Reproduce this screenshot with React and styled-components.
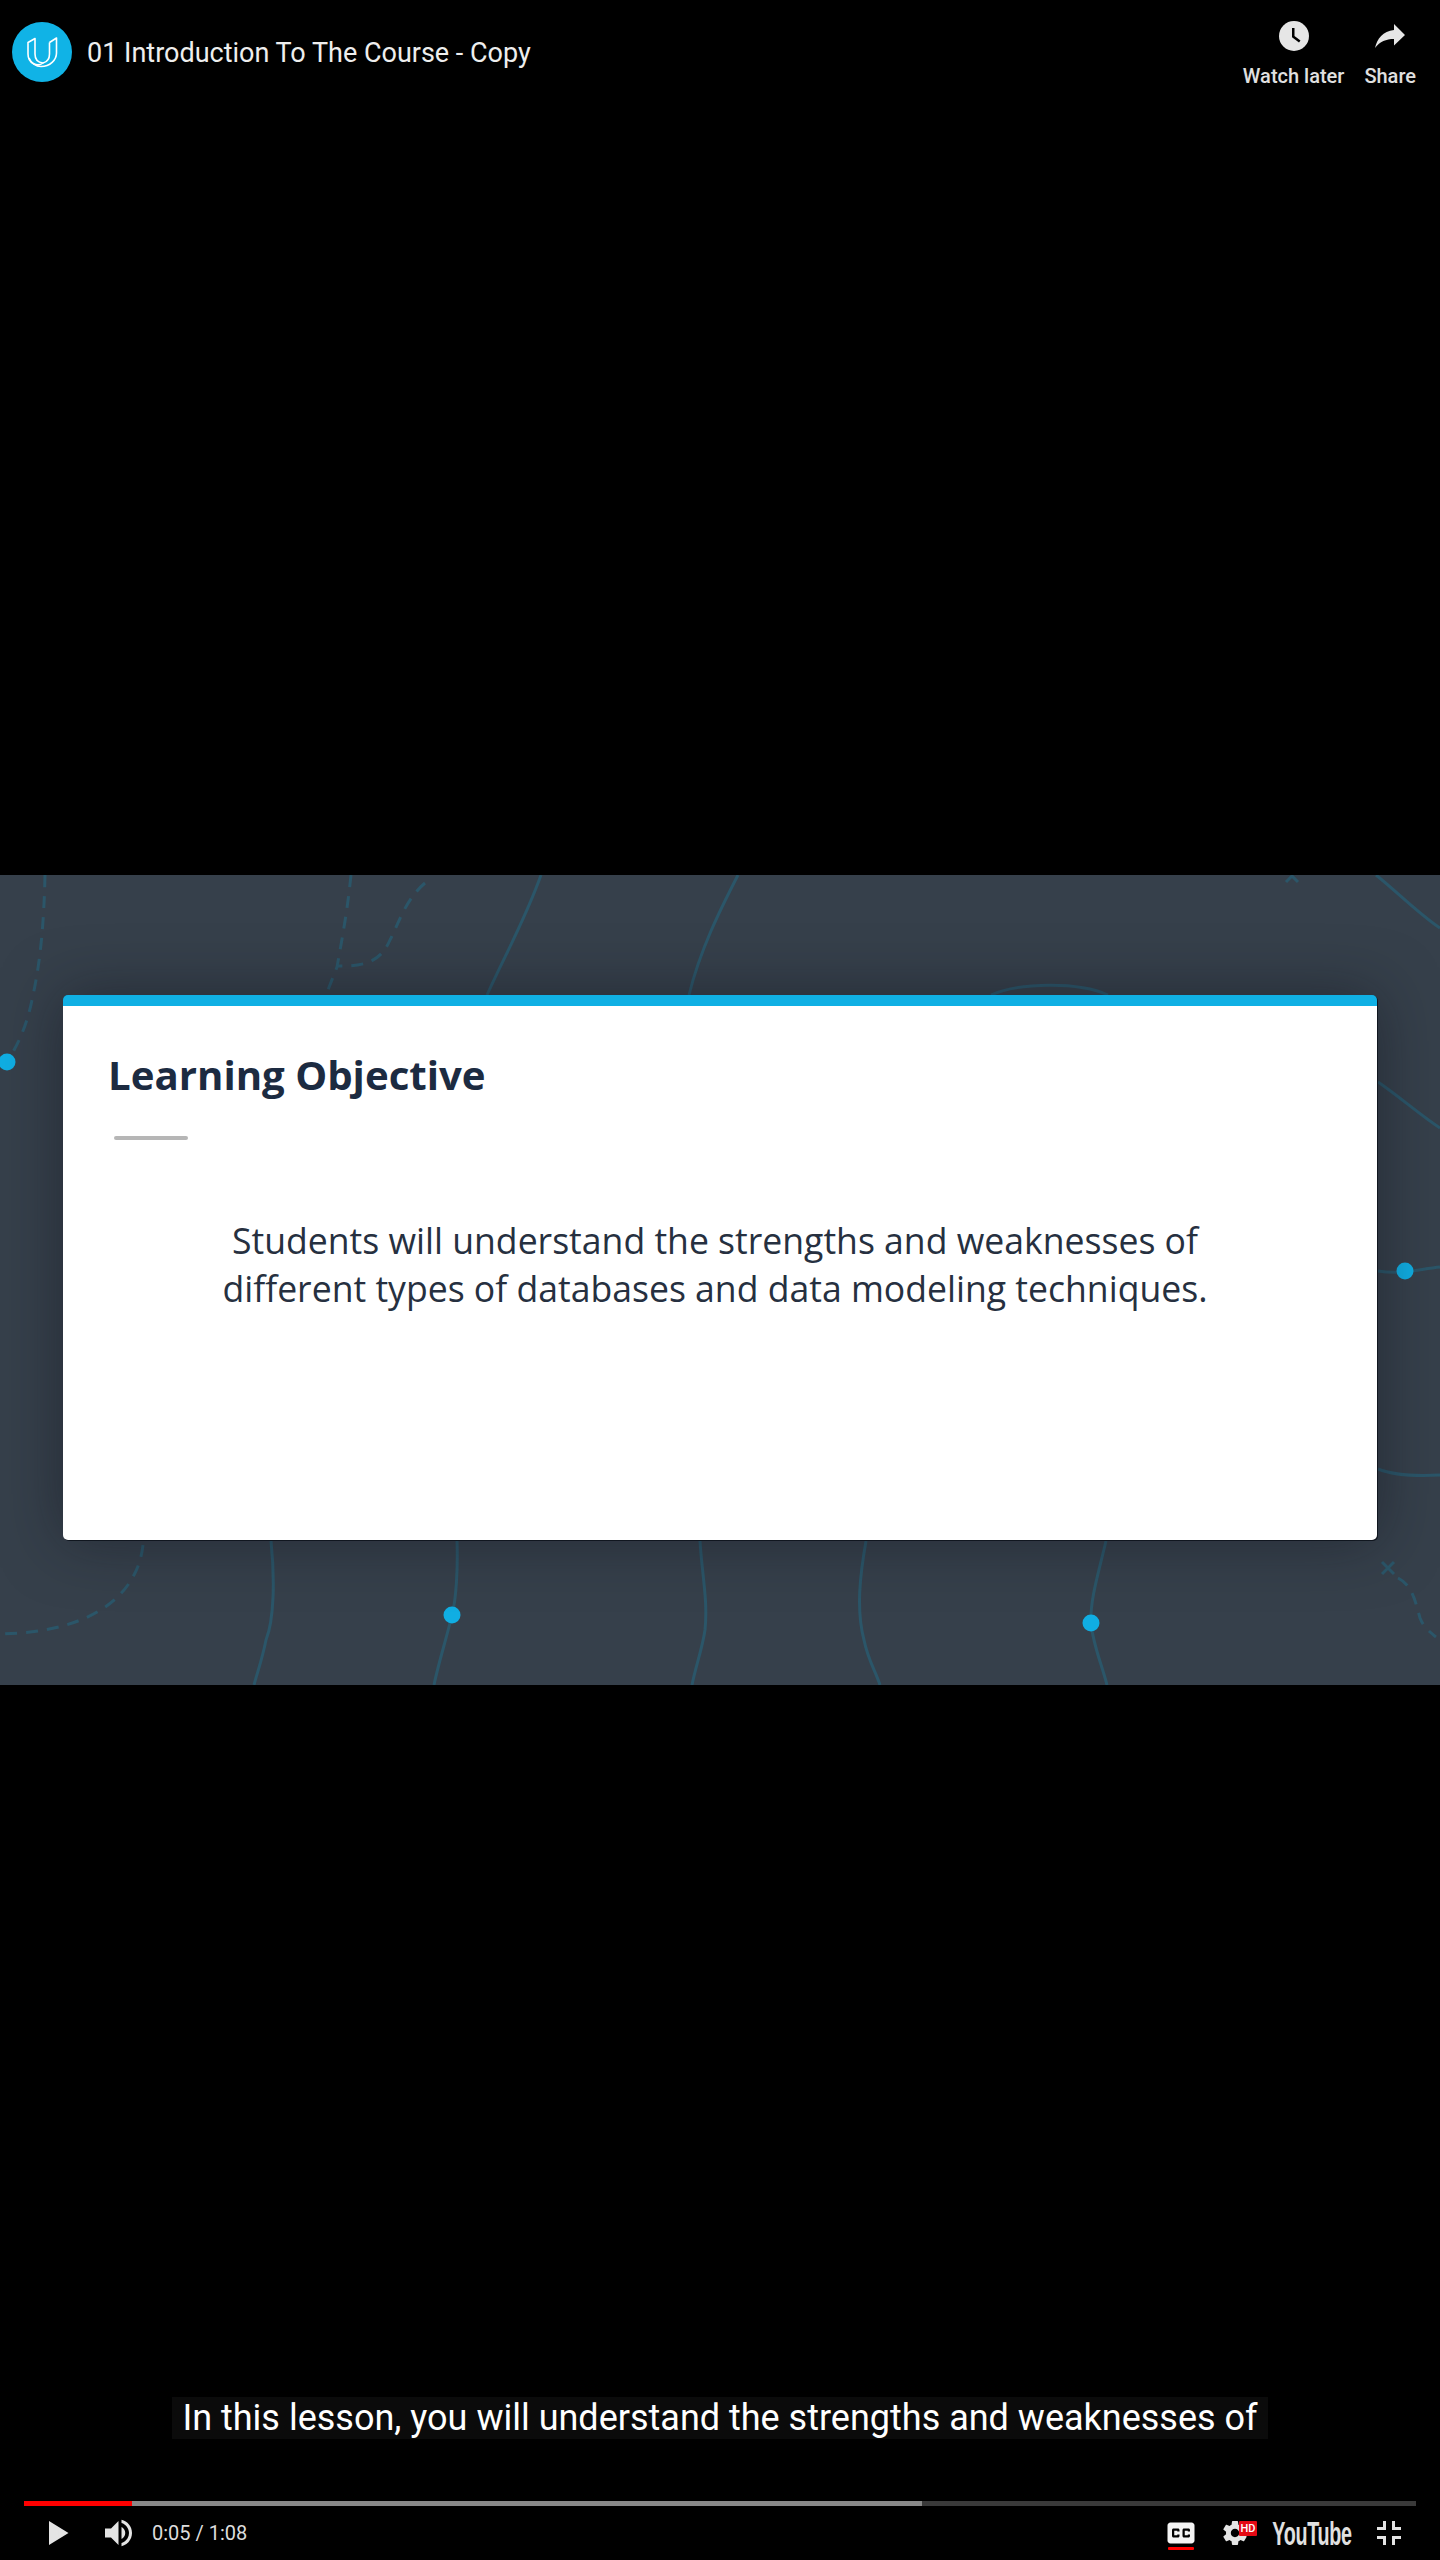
import styled, { createGlobalStyle } from 'styled-components'

const GlobalStyle = createGlobalStyle`
  html, body {
    margin: 0;
    padding: 0;
    background: #000;
  }
`

const ICON = '#e4e4e4'

function App() {
  return (
    <>
      <GlobalStyle />
      <Player>
        <TopZone>
          <TitleGroup>
            <ChannelLogo>
              <svg width="60" height="60" viewBox="0 0 60 60" fill="none" stroke="#fff" strokeWidth="1.6" strokeLinejoin="round">
                <path d="M16 20.5 L23 16.5 V32 C23 37 26 40.5 31 41 C26 45 16 42 16 32 Z" />
                <path d="M37.5 20.5 L44.5 16 V31 C44.5 38 38 44.5 29 44.5 C24 44.5 19 41 17 36 M37.5 20.5 V32 C37.5 37 35 40 31 41" />
              </svg>
            </ChannelLogo>
            <VideoTitle>01 Introduction To The Course - Copy</VideoTitle>
          </TitleGroup>
          <Actions>
            <Action>
              <svg width="30" height="30" viewBox="0 0 30 30">
                <circle cx="15" cy="15" r="15" fill="#e6e6e6" />
                <path d="M13 7 H15.5 V15 L21.5 19.5 L20 21.5 L13 16.2 Z" fill="#000" />
              </svg>
              <ActionLabel>Watch later</ActionLabel>
            </Action>
            <Action>
              <svg width="30" height="30" viewBox="0 0 30 30">
                <path d="M19 3 L30 14 L19 24.5 L19 18 C11 18 5 20.5 0 27 C2 18 8 10 19 9 Z" fill="#e6e6e6" />
              </svg>
              <ActionLabel>Share</ActionLabel>
            </Action>
          </Actions>
        </TopZone>

        <Slide>
          <SlideArt viewBox="0 875 1440 810" fill="none">
            <g stroke="#2b5669" strokeWidth="3">
              <path strokeDasharray="12 9" d="M45 875 C44 920 41 960 32 1000 C27 1025 18 1045 7 1062" />
              <path strokeDasharray="12 9" d="M351 875 C347 915 340 950 337 967 L326 995" />
              <path strokeDasharray="12 9" d="M425 883 C405 900 398 925 390 940 C382 958 370 967 338 966" />
              <path d="M541 875 C525 920 505 955 487 995" />
              <path d="M738 875 C720 910 700 950 689 995" />
              <path d="M991 995 C1020 982 1080 982 1108 995" />
              <path d="M1286 882 L1292 876 L1298 882" />
              <path d="M1376 875 C1395 890 1420 915 1440 928" />
              <path d="M1378 1082 C1400 1097 1420 1115 1440 1128" />
              <path d="M1378 1271 C1390 1273 1400 1272 1405 1272 C1420 1270 1430 1268 1440 1267" />
              <path d="M1378 1469 C1395 1476 1420 1476 1440 1475" />
              <path strokeDasharray="12 9" d="M143 1545 C138 1590 100 1632 0 1634" />
              <path d="M271 1541 C275 1580 274 1620 266 1640 C262 1660 258 1670 254 1685" />
              <path d="M457 1541 C458 1570 456 1600 452 1615 C446 1640 438 1665 434 1685" />
              <path d="M700 1541 C702 1575 708 1600 705 1630 C702 1650 696 1665 692 1685" />
              <path d="M866 1541 C860 1575 856 1610 864 1640 C868 1660 875 1670 880 1685" />
              <path d="M1106 1541 C1098 1575 1090 1600 1091 1623 C1093 1645 1102 1665 1107 1685" />
              <path d="M1382 1562 L1394 1574 M1394 1562 L1382 1574" />
              <path strokeDasharray="12 9" d="M1398 1578 C1412 1585 1415 1600 1420 1618 C1424 1628 1430 1632 1436 1637" />
            </g>
            <g fill="#10aee3">
              <circle cx="7" cy="1062" r="8.5" />
              <circle cx="1405" cy="1271" r="8.5" />
              <circle cx="452" cy="1615" r="8.5" />
              <circle cx="1091" cy="1623" r="8.5" />
            </g>
          </SlideArt>
          <Card>
            <CardTitle>Learning Objective</CardTitle>
            <Divider />
            <CardBody>
              Students will understand the strengths and weaknesses of
              <br />
              different types of databases and data modeling techniques.
            </CardBody>
          </Card>
        </Slide>

        <BottomZone>
          <CaptionRow>
            <Caption>In this lesson, you will understand the strengths and weaknesses of</Caption>
          </CaptionRow>
          <Progress>
            <ProgressFill $width={108} $color="#ff0000" />
            <ProgressFill $width={790} $color="#888888" />
          </Progress>
          <Controls>
            <ControlGroup>
              <PlayIcon viewBox="0 0 36 36">
                <path fill={ICON} d="M12 26 L18.5 22 L18.5 14 L12 10 Z M18.5 22 L25 18 L18.5 14 Z" />
              </PlayIcon>
              <ControlIcon viewBox="0 0 36 36">
                <path fill={ICON} d="M8,21 L12,21 L17,26 L17,10 L12,15 L8,15 L8,21 Z M19,14 L19,22 C20.48,21.32 21.5,19.77 21.5,18 C21.5,16.26 20.48,14.74 19,14 Z M19,11.29 C21.89,12.15 24,14.83 24,18 C24,21.17 21.89,23.85 19,24.71 L19,26.77 C23.01,25.86 26,22.28 26,18 C26,13.72 23.01,10.14 19,9.23 L19,11.29 Z" />
              </ControlIcon>
              <TimeText>0:05 / 1:08</TimeText>
            </ControlGroup>
            <ControlGroup>
              <CaptionButton>
                <ControlIcon viewBox="0 0 36 36">
                  <path fill="#f4f4f4" d="M11,11 C9.89,11 9,11.9 9,13 L9,23 C9,24.1 9.89,25 11,25 L25,25 C26.1,25 27,24.1 27,23 L27,13 C27,11.9 26.1,11 25,11 L11,11 Z M17,17 L15.5,17 L15.5,16.5 L13.5,16.5 L13.5,19.5 L15.5,19.5 L15.5,19 L17,19 L17,20 C17,20.55 16.55,21 16,21 L13,21 C12.45,21 12,20.55 12,20 L12,16 C12,15.45 12.45,15 13,15 L16,15 C16.55,15 17,15.45 17,16 L17,17 Z M24,17 L22.5,17 L22.5,16.5 L20.5,16.5 L20.5,19.5 L22.5,19.5 L22.5,19 L24,19 L24,20 C24,20.55 23.55,21 23,21 L20,21 C19.45,21 19,20.55 19,20 L19,16 C19,15.45 19.45,15 20,15 L23,15 C23.55,15 24,15.45 24,16 L24,17 Z" />
                </ControlIcon>
              </CaptionButton>
              <SettingsButton>
                <ControlIcon viewBox="0 0 36 36">
                  <path fill={ICON} d="m 23.94,18.78 c .03,-0.25 .05,-0.51 .05,-0.78 0,-0.27 -0.02,-0.52 -0.05,-0.78 l 1.68,-1.32 c .15,-0.12 .19,-0.33 .09,-0.51 l -1.6,-2.76 c -0.09,-0.17 -0.31,-0.24 -0.48,-0.17 l -1.99,.8 c -0.41,-0.32 -0.86,-0.58 -1.35,-0.78 l -0.30,-2.12 c -0.02,-0.19 -0.19,-0.33 -0.39,-0.33 l -3.2,0 c -0.2,0 -0.36,.14 -0.39,.33 l -0.30,2.12 c -0.48,.2 -0.93,.47 -1.35,.78 l -1.99,-0.8 c -0.18,-0.07 -0.39,0 -0.48,.17 l -1.6,2.76 c -0.10,.17 -0.05,.39 .09,.51 l 1.68,1.32 c -0.03,.25 -0.05,.52 -0.05,.78 0,.26 .02,.52 .05,.78 l -1.68,1.32 c -0.15,.12 -0.19,.33 -0.09,.51 l 1.6,2.76 c .09,.17 .31,.24 .48,.17 l 1.99,-0.8 c .41,.32 .86,.58 1.35,.78 l .30,2.12 c .02,.19 .19,.33 .39,.33 l 3.2,0 c .2,0 .36,-0.14 .39,-0.33 l .30,-2.12 c .48,-0.2 .93,-0.47 1.35,-0.78 l 1.99,.8 c .18,.07 .39,0 .48,-0.17 l 1.6,-2.76 c .09,-0.17 .05,-0.39 -0.09,-0.51 l -1.68,-1.32 0,0 z m -5.94,2.01 c -1.54,0 -2.8,-1.25 -2.8,-2.8 0,-1.54 1.25,-2.8 2.8,-2.8 1.54,0 2.8,1.25 2.8,2.8 0,1.54 -1.25,2.8 -2.8,2.8 l 0,0 z" />
                </ControlIcon>
                <HdBadge>HD</HdBadge>
              </SettingsButton>
              <YoutubeMark>YouTube</YoutubeMark>
              <ControlIcon viewBox="0 0 36 36">
                <path fill={ICON} d="M14,14 L10,14 L10,16 L16,16 L16,10 L14,10 L14,14 Z M22,14 L22,10 L20,10 L20,16 L26,16 L26,14 L22,14 Z M20,26 L22,26 L22,22 L26,22 L26,20 L20,20 L20,26 Z M10,22 L14,22 L14,26 L16,26 L16,20 L10,20 L10,22 Z" />
              </ControlIcon>
            </ControlGroup>
          </Controls>
        </BottomZone>
      </Player>
    </>
  )
}

export default App

const Player = styled.div`
  display: flex;
  flex-direction: column;
  width: 1440px;
  height: 2560px;
  background: #000;
  overflow: hidden;
`

const TopZone = styled.div`
  height: 875px;
  display: flex;
  justify-content: space-between;
  align-items: flex-start;
  padding: 22px 24px 0 12px;
  box-sizing: border-box;
`

const TitleGroup = styled.div`
  display: flex;
  align-items: center;
  gap: 15px;
`

const ChannelLogo = styled.div`
  width: 60px;
  height: 60px;
  border-radius: 50%;
  background: #10b3e6;
`

const VideoTitle = styled.div`
  font: 400 27px/60px Roboto, sans-serif;
  color: #eeeeee;
  position: relative;
  top: 1px;
`

const Actions = styled.div`
  display: flex;
  gap: 20px;
`

const Action = styled.div`
  display: flex;
  flex-direction: column;
  align-items: center;
  margin-top: -1px;
  gap: 14px;
`

const ActionLabel = styled.div`
  font: 500 20px/23px Roboto, sans-serif;
  color: #e0e0e0;
`

const Slide = styled.div`
  position: relative;
  height: 810px;
  padding: 120px 63px 145px;
  box-sizing: border-box;
  display: flex;
  background: #36404b;
`

const SlideArt = styled.svg`
  position: absolute;
  left: 0;
  top: 0;
  width: 100%;
  height: 100%;
`

const Card = styled.div`
  position: relative;
  flex: 1;
  background: #fff;
  border-top: 11px solid #10b0e4;
  border-radius: 5px;
  box-shadow: 1px 1px 0 #10161f, 0 0 60px rgba(18, 20, 30, 0.5);
  padding: 42px 55px 0 45px;
`

const CardTitle = styled.h1`
  margin: 0;
  font: 700 40.2px/54px "Open Sans", sans-serif;
  color: #1c2b41;
`

const Divider = styled.div`
  width: 74px;
  height: 4px;
  margin: 34px 0 0 6px;
  background: #b6b6b6;
  border-radius: 2px;
`

const CardBody = styled.p`
  margin: 76px 0 0;
  font: 400 35.6px/48px "Open Sans", sans-serif;
  color: #263040;
  text-align: center;
`

const BottomZone = styled.div`
  flex: 1;
  display: flex;
  flex-direction: column;
  justify-content: flex-end;
`

const CaptionRow = styled.div`
  display: flex;
  justify-content: center;
  margin-bottom: 62px;
`

const Caption = styled.div`
  padding: 0 10px;
  height: 42px;
  font: 400 36px/42px Roboto, sans-serif;
  color: #fff;
  background: #0b0b0b;
  white-space: nowrap;
`

const Progress = styled.div`
  display: flex;
  height: 5px;
  margin: 0 24px;
  background: #3a3a3a;
`

const ProgressFill = styled.div`
  width: ${props => props.$width}px;
  background: ${props => props.$color};
`

const Controls = styled.div`
  display: flex;
  justify-content: space-between;
  align-items: center;
  height: 54px;
  padding: 0 24px 0 31px;
`

const ControlGroup = styled.div`
  display: flex;
  align-items: center;
`

const ControlIcon = styled.svg`
  display: block;
  width: 54px;
  height: 54px;
`

const PlayIcon = styled(ControlIcon)`
  margin-right: 8px;
`

const TimeText = styled.div`
  margin-left: 5px;
  font: 400 20px/54px Roboto, sans-serif;
  color: #dddddd;
`

const CaptionButton = styled.div`
  position: relative;
  &::after {
    content: '';
    position: absolute;
    left: 14px;
    right: 14px;
    bottom: 10px;
    height: 3px;
    border-radius: 1px;
    background: #ff0000;
  }
`

const SettingsButton = styled.div`
  position: relative;
`

const HdBadge = styled.div`
  position: absolute;
  left: 31px;
  top: 15px;
  width: 18px;
  height: 15px;
  background: #e50914;
  border-radius: 1px;
  font: 500 11px/15px Roboto, sans-serif;
  color: #fff;
  text-align: center;
`

const YoutubeMark = styled.div`
  width: 100px;
  white-space: nowrap;
  display: flex;
  justify-content: center;
  font: 700 34px/54px "Liberation Sans", sans-serif;
  color: #e0e0e0;
  letter-spacing: -0.5px;
  transform: scaleX(0.58);
`
